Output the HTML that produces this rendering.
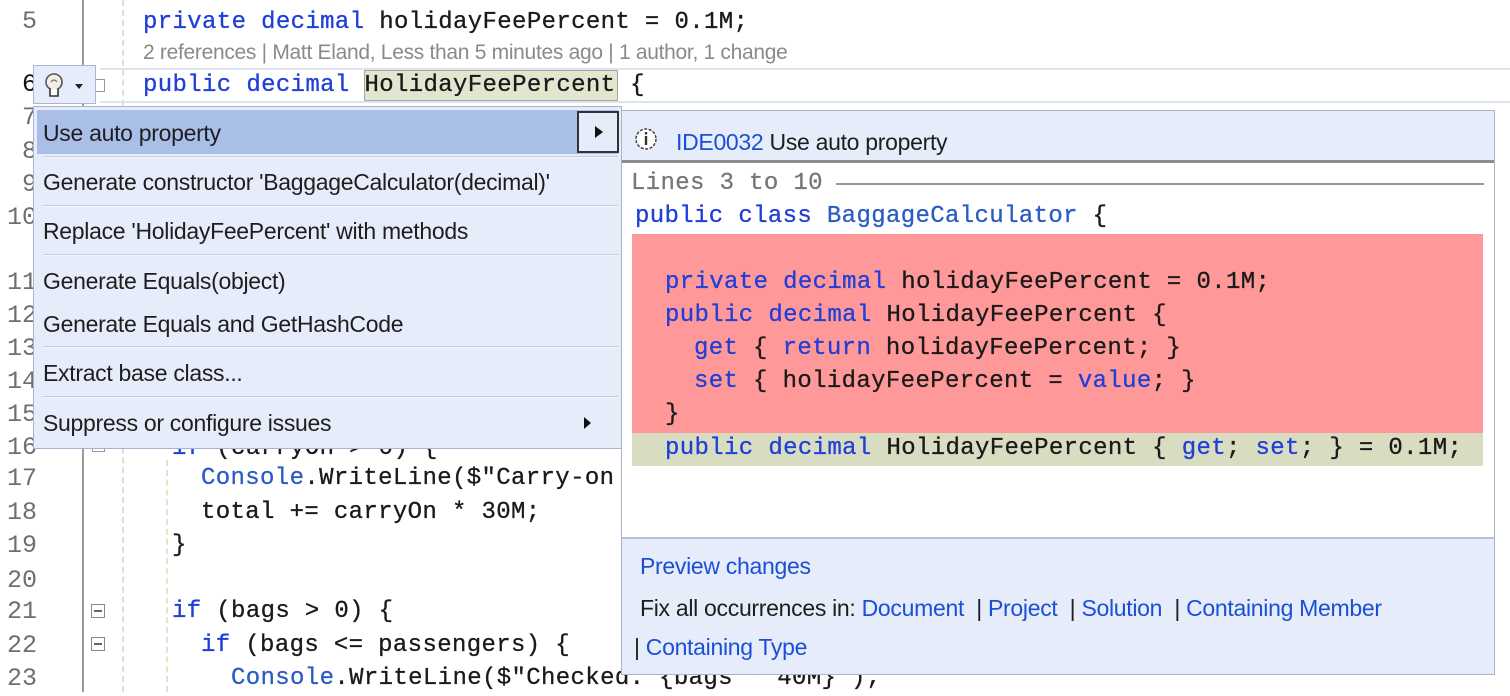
<!DOCTYPE html>
<html><head><meta charset="utf-8">
<style>
*{margin:0;padding:0;box-sizing:border-box}
body{width:1510px;height:692px;overflow:hidden;background:#fff;position:relative;font-family:"Liberation Sans",sans-serif}
.c{position:absolute;font-family:"Liberation Mono",monospace;font-size:24px;letter-spacing:0.36px;line-height:34px;height:34px;white-space:pre;color:#1a1a1a;-webkit-text-stroke:0.3px}
.n{position:absolute;left:0;width:37px;text-align:right;font-family:"Liberation Mono",monospace;font-size:25px;line-height:34px;color:#6f6f6f}
.k{color:#1f3fd8}.t{color:#2b5cc4}
.ui{position:absolute;font-size:23px;line-height:30px;color:#1e1e1e;white-space:nowrap;letter-spacing:-0.3px}
.sep{position:absolute;left:43px;width:575px;height:2px;background:#c3cbe0;border-bottom:1px solid #f4f6fc}
.lk{color:#1a4fd6}
</style></head><body>
<div style="position:absolute;left:82px;top:0;width:2px;height:692px;background:#9a9a9a"></div>
<div style="position:absolute;left:122px;top:0;width:0;height:692px;border-left:2px dashed #ddd"></div>
<div style="position:absolute;left:166px;top:460px;width:0;height:232px;border-left:2px dashed #e4e4c8"></div>
<div style="position:absolute;left:100px;top:68px;width:1410px;height:35px;border-top:2px solid #dde3f0;border-bottom:2px solid #dde3f0"></div>
<div style="position:absolute;left:364px;top:70px;width:254px;height:31px;background:#e3e6cf;border:1px solid #a8a89a"></div>

<div class="n" style="top:5px">5</div>
<div class="n" style="top:68px;color:#111">6</div>
<div class="n" style="top:101px">7</div>
<div class="n" style="top:135px">8</div>
<div class="n" style="top:168px">9</div>
<div class="n" style="top:201px">10</div>
<div class="n" style="top:266px">11</div>
<div class="n" style="top:299px">12</div>
<div class="n" style="top:332px">13</div>
<div class="n" style="top:365px">14</div>
<div class="n" style="top:398px">15</div>
<div class="n" style="top:431px">16</div>
<div class="n" style="top:462px">17</div>
<div class="n" style="top:496px">18</div>
<div class="n" style="top:529px">19</div>
<div class="n" style="top:564px">20</div>
<div class="n" style="top:595px">21</div>
<div class="n" style="top:629px">22</div>
<div class="n" style="top:662px">23</div>

<div class="c" style="left:143px;top:6px"><span class="k">private decimal</span> holidayFeePercent = 0.1M;</div>
<div class="ui" style="left:143px;top:38px;font-size:21px;color:#8a8a8a">2 references | Matt Eland, Less than 5 minutes ago | 1 author, 1 change</div>
<div class="c" style="left:143px;top:69px"><span class="k">public decimal</span> HolidayFeePercent {</div>
<div class="c" style="left:172px;top:432px"><span class="k">if</span> (carryOn &gt; 0) {</div>
<div class="c" style="left:201px;top:462px"><span class="t">Console</span>.WriteLine($"Carry-on</div>
<div class="c" style="left:201px;top:496px">total += carryOn * 30M;</div>
<div class="c" style="left:172px;top:529px">}</div>
<div class="c" style="left:172px;top:595px"><span class="k">if</span> (bags &gt; 0) {</div>
<div class="c" style="left:201px;top:629px"><span class="k">if</span> (bags &lt;= passengers) {</div>
<div class="c" style="left:231px;top:662px"><span class="t">Console</span>.WriteLine($"Checked: {bags * 40M}");</div>

<div style="position:absolute;left:92px;top:79px;width:13px;height:13px;border:1px solid #999;background:#fff"></div>
<div style="position:absolute;left:92px;top:439px;width:13px;height:13px;border:1px solid #999;background:#fff"></div>
<div style="position:absolute;left:91px;top:604px;width:14px;height:14px;border:1px solid #888;background:#fff"><div style="margin:5px 2px;height:2px;background:#666"></div></div>
<div style="position:absolute;left:91px;top:637px;width:14px;height:14px;border:1px solid #888;background:#fff"><div style="margin:5px 2px;height:2px;background:#666"></div></div>

<div style="position:absolute;left:33px;top:65px;width:63px;height:39px;background:#e6ecfa;border:1px solid #a9b7d6">
<svg width="63" height="39" style="position:absolute;left:0;top:0">
<circle cx="20" cy="16" r="8" fill="#f3efe6" stroke="#555" stroke-width="1.6"/>
<path d="M16 23 L16 30 L24 30 L24 23" fill="#fff" stroke="#333" stroke-width="1.6"/>
<path d="M17 16 Q20 12 23 16" fill="none" stroke="#777" stroke-width="1.2"/>
<path d="M41 18 L49 18 L45 23 Z" fill="#222"/>
</svg></div>

<div style="position:absolute;left:33px;top:106px;width:589px;height:343px;background:#e6ecfa;border:1px solid #a9b3cc;z-index:2">
<div style="position:absolute;left:3px;top:3px;width:581px;height:44px;background:#aabfe8"></div>
<div style="position:absolute;left:543px;top:4px;width:42px;height:42px;border:2px solid #333;background:#e6ecfa"><svg width="38" height="38"><path d="M16 13 L24 19 L16 25 Z" fill="#111"/></svg></div>
</div>
<div style="z-index:3;position:absolute;left:0;top:0">
<div class="ui" style="left:43px;top:118px">Use auto property</div>
<div class="sep" style="top:156px"></div>
<div class="ui" style="left:43px;top:167px">Generate constructor 'BaggageCalculator(decimal)'</div>
<div class="sep" style="top:205px"></div>
<div class="ui" style="left:43px;top:216px">Replace 'HolidayFeePercent' with methods</div>
<div class="sep" style="top:254px"></div>
<div class="ui" style="left:43px;top:266px">Generate Equals(object)</div>
<div class="ui" style="left:43px;top:309px">Generate Equals and GetHashCode</div>
<div class="sep" style="top:346px"></div>
<div class="ui" style="left:43px;top:358px">Extract base class...</div>
<div class="sep" style="top:396px"></div>
<div class="ui" style="left:43px;top:408px">Suppress or configure issues</div>
<svg style="position:absolute;left:580px;top:413px" width="14" height="20"><path d="M4 4 L11 10 L4 16 Z" fill="#111"/></svg>
</div>

<div style="position:absolute;left:621px;top:110px;width:874px;height:565px;background:#fff;border:1px solid #a9b3cc;z-index:2">
<div style="position:absolute;left:0;top:0;width:872px;height:52px;background:#e6ecfa;border-bottom:3px solid #8f8a8e"></div>
<svg style="position:absolute;left:12px;top:16px" width="24" height="24"><circle cx="12" cy="12" r="10" fill="#fff" stroke="#444" stroke-width="1.5" stroke-dasharray="3 1.5"/><rect x="10.8" y="9" width="2.4" height="9" fill="#333"/><rect x="10.8" y="5" width="2.4" height="2.4" fill="#333"/></svg>
<div class="ui" style="left:54px;top:16px"><span class="lk">IDE0032</span> Use auto property</div>
<div class="c" style="left:9px;top:56px;color:#777">Lines 3 to 10</div>
<div style="position:absolute;left:214px;top:72px;width:648px;height:2px;background:#999"></div>
<div class="c" style="left:13px;top:89px"><span class="k">public class</span> <span class="t">BaggageCalculator</span> {</div>
<div style="position:absolute;left:10px;top:123px;width:851px;height:199px;background:#ff9898"></div>
<div style="position:absolute;left:10px;top:322px;width:851px;height:33px;background:#d8ddc1"></div>
<div class="c" style="left:43px;top:155px"><span class="k">private decimal</span> holidayFeePercent = 0.1M;</div>
<div class="c" style="left:43px;top:188px"><span class="k">public decimal</span> HolidayFeePercent {</div>
<div class="c" style="left:72px;top:221px"><span class="k">get</span> { <span class="k">return</span> holidayFeePercent; }</div>
<div class="c" style="left:72px;top:254px"><span class="k">set</span> { holidayFeePercent = <span class="k">value</span>; }</div>
<div class="c" style="left:43px;top:287px">}</div>
<div class="c" style="left:43px;top:321px"><span class="k">public decimal</span> HolidayFeePercent { <span class="k">get</span>; <span class="k">set</span>; } = 0.1M;</div>
<div style="position:absolute;left:0;top:426px;width:872px;height:137px;background:#e6ecfa;border-top:2px solid #b7c2dc"></div>
<div class="ui" style="left:18px;top:440px;color:#1a4fd6">Preview changes</div>
<div class="ui" style="left:18px;top:482px">Fix all occurrences in: <span class="lk">Document</span> &nbsp;| <span class="lk">Project</span> &nbsp;| <span class="lk">Solution</span> &nbsp;| <span class="lk">Containing Member</span></div>
<div class="ui" style="left:12px;top:521px">| <span class="lk">Containing Type</span></div>
</div>
</body></html>
